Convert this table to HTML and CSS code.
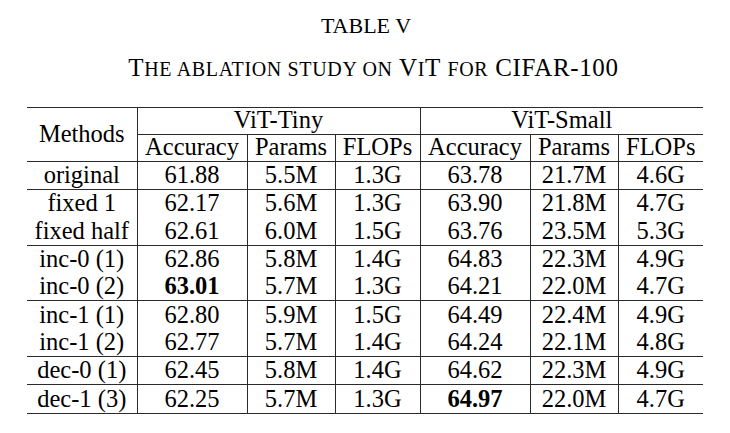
FILE: index.html
```html
<!DOCTYPE html>
<html>
<head>
<meta charset="utf-8">
<link rel="stylesheet" href="styles.css">
</head>
<body>
<div class="page">
  <div class="caption">
    <div class="label">TABLE V</div>
    <div class="title">T<span class="sc">HE ABLATION STUDY ON</span> V<span class="sc">I</span>T <span class="sc">FOR</span> CIFAR-100</div>
  </div>
  <table class="abl">
    <colgroup>
      <col class="c-m"><col class="c-a"><col class="c-p"><col class="c-f"><col class="c-a"><col class="c-p"><col class="c-f">
    </colgroup>
    <thead>
      <tr class="top">
        <th rowspan="2" class="vr">Methods</th>
        <th colspan="3" class="vr cl">ViT-Tiny</th>
        <th colspan="3" class="cl">ViT-Small</th>
      </tr>
      <tr class="sub">
        <th class="vr">Accuracy</th><th class="vr">Params</th><th class="vr">FLOPs</th>
        <th class="vr">Accuracy</th><th class="vr">Params</th><th>FLOPs</th>
      </tr>
    </thead>
    <tbody>
      <tr class="g"><td>original</td><td>61.88</td><td>5.5M</td><td>1.3G</td><td>63.78</td><td>21.7M</td><td>4.6G</td></tr>
      <tr class="g"><td>fixed 1</td><td>62.17</td><td>5.6M</td><td>1.3G</td><td>63.90</td><td>21.8M</td><td>4.7G</td></tr>
      <tr><td>fixed half</td><td>62.61</td><td>6.0M</td><td>1.5G</td><td>63.76</td><td>23.5M</td><td>5.3G</td></tr>
      <tr class="g"><td>inc-0 (1)</td><td>62.86</td><td>5.8M</td><td>1.4G</td><td>64.83</td><td>22.3M</td><td>4.9G</td></tr>
      <tr><td>inc-0 (2)</td><td><b>63.01</b></td><td>5.7M</td><td>1.3G</td><td>64.21</td><td>22.0M</td><td>4.7G</td></tr>
      <tr class="g"><td>inc-1 (1)</td><td>62.80</td><td>5.9M</td><td>1.5G</td><td>64.49</td><td>22.4M</td><td>4.9G</td></tr>
      <tr><td>inc-1 (2)</td><td>62.77</td><td>5.7M</td><td>1.4G</td><td>64.24</td><td>22.1M</td><td>4.8G</td></tr>
      <tr class="g"><td>dec-0 (1)</td><td>62.45</td><td>5.8M</td><td>1.4G</td><td>64.62</td><td>22.3M</td><td>4.9G</td></tr>
      <tr class="g last"><td>dec-1 (3)</td><td>62.25</td><td>5.7M</td><td>1.3G</td><td><b>64.97</b></td><td>22.0M</td><td>4.7G</td></tr>
    </tbody>
  </table>
</div>
</body>
</html>
```
FILE: styles.css
```css
html, body {
  margin: 0;
  padding: 0;
  background: #fff;
}
body {
  font-family: "Liberation Serif", "Times New Roman", serif;
  color: #000;
}
.page {
  width: 730px;
  height: 433px;
  padding-top: 11px;
  box-sizing: border-box;
}
.caption {
  text-align: center;
  padding-left: 2px;
}
.label {
  font-size: 22px;
  line-height: 30px;
}
.title {
  font-size: 25px;
  line-height: 32px;
  margin-top: 11px;
  padding-left: 15px;
  letter-spacing: 0.65px;
}
.sc {
  font-size: 20px;
}
.abl {
  margin: 22px 0 0 27px;
  width: 676px;
  table-layout: fixed;
  border-collapse: collapse;
  font-size: 24.5px;
}
.c-m { width: 110px; }
.c-a { width: 110px; }
.c-p { width: 88px; }
.c-f { width: 85px; }
.abl th, .abl td {
  font-weight: normal;
  padding: 0 0 2px 0;
  text-align: center;
  white-space: nowrap;
}
.abl th {
  height: 24px;
  line-height: 24px;
}
.abl td {
  height: 25.3px;
  line-height: 25px;
}
.abl b { font-weight: bold; }
.abl td { border-right: 1px solid #2a2a2a; }
.abl td:last-child { border-right: none; }
.abl .vr { border-right: 1px solid #2a2a2a; }
.abl tr.top th { border-top: 1px solid #2a2a2a; }
.abl th.cl { border-bottom: 1px solid #2a2a2a; }
.abl tr.sub th { border-bottom: 1px solid #2a2a2a; }
.abl tr.g td { border-top: 1px solid #2a2a2a; }
.abl tr.last td { border-bottom: 1px solid #2a2a2a; }
```
